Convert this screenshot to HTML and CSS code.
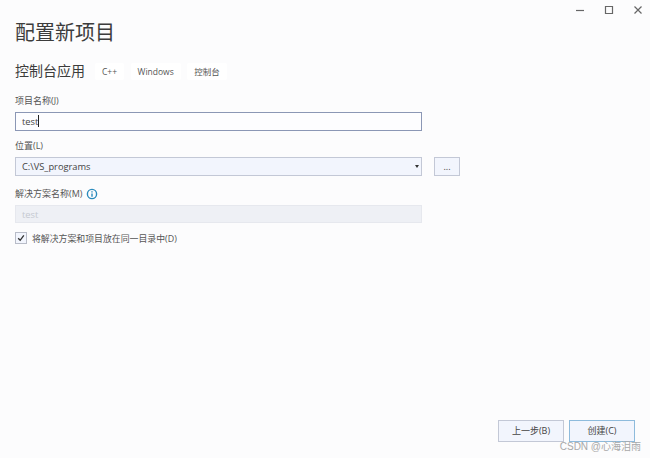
FILE: index.html
```html
<!DOCTYPE html>
<html lang="zh">
<head>
<meta charset="utf-8">
<title>配置新项目</title>
<link rel="stylesheet" href="styles.css">
</head>
<body>
<div class="window">
  <div class="caption">
    <svg class="cap" viewBox="0 0 10 10"><path d="M1 5.5H9" /></svg>
    <svg class="cap" viewBox="0 0 10 10"><path d="M1.5 1.5H8.5V8.5H1.5Z" /></svg>
    <svg class="cap" viewBox="0 0 10 10"><path d="M1.5 1.5L8.5 8.5M8.5 1.5L1.5 8.5" /></svg>
  </div>
  <main class="content">
    <h1 class="title">配置新项目</h1>
    <div class="subhead">
      <h2 class="subtitle">控制台应用</h2>
      <div class="tags">
        <span class="tag">C++</span>
        <span class="tag">Windows</span>
        <span class="tag">控制台</span>
      </div>
    </div>
    <label class="label first">项目名称(J)</label>
    <div class="field focused">test<span class="caret"></span></div>
    <label class="label second">位置(L)</label>
    <div class="row">
      <div class="field select">C:\VS_programs<span class="arrow"></span></div>
      <div class="browse">...</div>
    </div>
    <label class="label third">解决方案名称(M)
      <svg class="info" viewBox="0 0 12 12"><circle cx="6" cy="6" r="4.6"/><path d="M6 5.4V8.8M6 3.2V4.4"/></svg>
    </label>
    <div class="field disabled">test</div>
    <div class="check-row">
      <span class="checkbox"><svg viewBox="0 0 12 12"><path d="M2.6 6.4L5 8.8L9.4 2.8"/></svg></span>
      <span class="check-label">将解决方案和项目放在同一目录中(D)</span>
    </div>
  </main>
  <div class="actions">
    <div class="btn">上一步(B)</div>
    <div class="btn primary">创建(C)</div>
  </div>
  <div class="watermark">CSDN @心海泪雨</div>
</div>
</body>
</html>
```

FILE: styles.css
```css
* { box-sizing: border-box; }
html, body { margin: 0; padding: 0; }
body {
  width: 650px;
  height: 458px;
  overflow: hidden;
  background: #fcfcfd;
  font-family: "Open Sans", "Noto Sans CJK SC", sans-serif;
  color: #444;
}
.window {
  position: relative;
  width: 650px;
  height: 458px;
  display: flex;
  flex-direction: column;
}
.caption {
  height: 22px;
  display: flex;
  justify-content: flex-end;
  align-items: center;
  gap: 19px;
  padding: 0 7px 2px 0;
}
.cap { width: 10px; height: 10px; fill: none; stroke: #666; stroke-width: 1.2; }
.content { padding: 0 0 0 15px; flex: 1; }
.title {
  margin: 0;
  font-size: 20px;
  line-height: 22px;
  font-weight: 400;
  color: #3c3c3c;
}
.subhead { display: flex; align-items: center; margin-top: 17px; height: 20px; }
.subtitle { margin: 0; font-size: 14px; line-height: 20px; font-weight: 400; color: #3c3c3c; }
.tags { display: flex; gap: 6.5px; margin-left: 10px; }
.tag {
  height: 17px;
  line-height: 17px;
  padding: 0 7px;
  margin: 0;
  background: #fff;
  font-size: 8.5px;
  color: #555;
  border-radius: 2px;
}
.label { display: block; font-size: 9px; line-height: 13px; color: #555; }
.first { margin-top: 13px; }
.second { margin-top: 8px; }
.third { margin-top: 11px; display: flex; align-items: center; gap: 4px; }
.field {
  width: 407px;
  height: 19px;
  margin-top: 5px;
  padding-left: 6px;
  font-size: 9.3px;
  line-height: 17px;
  color: #444;
  border: 1px solid #aab;
  background: #fdfdff;
}
.focused { border-color: #8b97b5; }
.caret { display: inline-block; width: 1px; height: 12px; background: #222; vertical-align: -2px; }
.row { display: flex; gap: 12px; align-items: flex-start; }
.select {
  position: relative;
  background: #f2f5fd;
  border-color: #c3c8d6;
}
.arrow {
  position: absolute;
  right: 2px;
  top: 7px;
  border-left: 2.5px solid transparent;
  border-right: 2.5px solid transparent;
  border-top: 3px solid #333;
}
.browse {
  width: 26px;
  height: 19px;
  margin-top: 5px;
  text-align: center;
  font-size: 9px;
  line-height: 17px;
  border: 1px solid #c3c8d6;
  background: #f2f5fd;
  color: #444;
}
.info { width: 12px; height: 12px; fill: none; stroke: #2b8bbd; stroke-width: 1.4; }
.disabled {
  height: 18px;
  background: #eef0f5;
  border-color: #e6e8ee;
  color: #c5c9d1;
}
.check-row { display: flex; align-items: center; gap: 5px; margin-top: 9px; height: 12px; }
.checkbox {
  width: 12px;
  height: 12px;
  border: 1px solid #b8bcc8;
  background: #f2f5fd;
  display: flex;
}
.checkbox svg { width: 10px; height: 10px; fill: none; stroke: #333; stroke-width: 1.6; }
.check-label { font-size: 8.9px; line-height: 13px; color: #555; }
.actions { display: flex; justify-content: flex-end; gap: 5px; padding-right: 15px; margin-bottom: 16px; }
.btn {
  width: 66px;
  height: 22px;
  text-align: center;
  font-size: 9px;
  line-height: 20px;
  color: #444;
  background: #f2f5fd;
  border: 1px solid #c3c8d6;
}
.primary { border-color: #8ebbdc; }
.watermark {
  position: absolute;
  right: 9px;
  bottom: 4px;
  font-family: "Liberation Sans", "Noto Sans CJK SC", sans-serif;
  font-size: 10px;
  line-height: 14px;
  color: #a9a9a9;
}
```
